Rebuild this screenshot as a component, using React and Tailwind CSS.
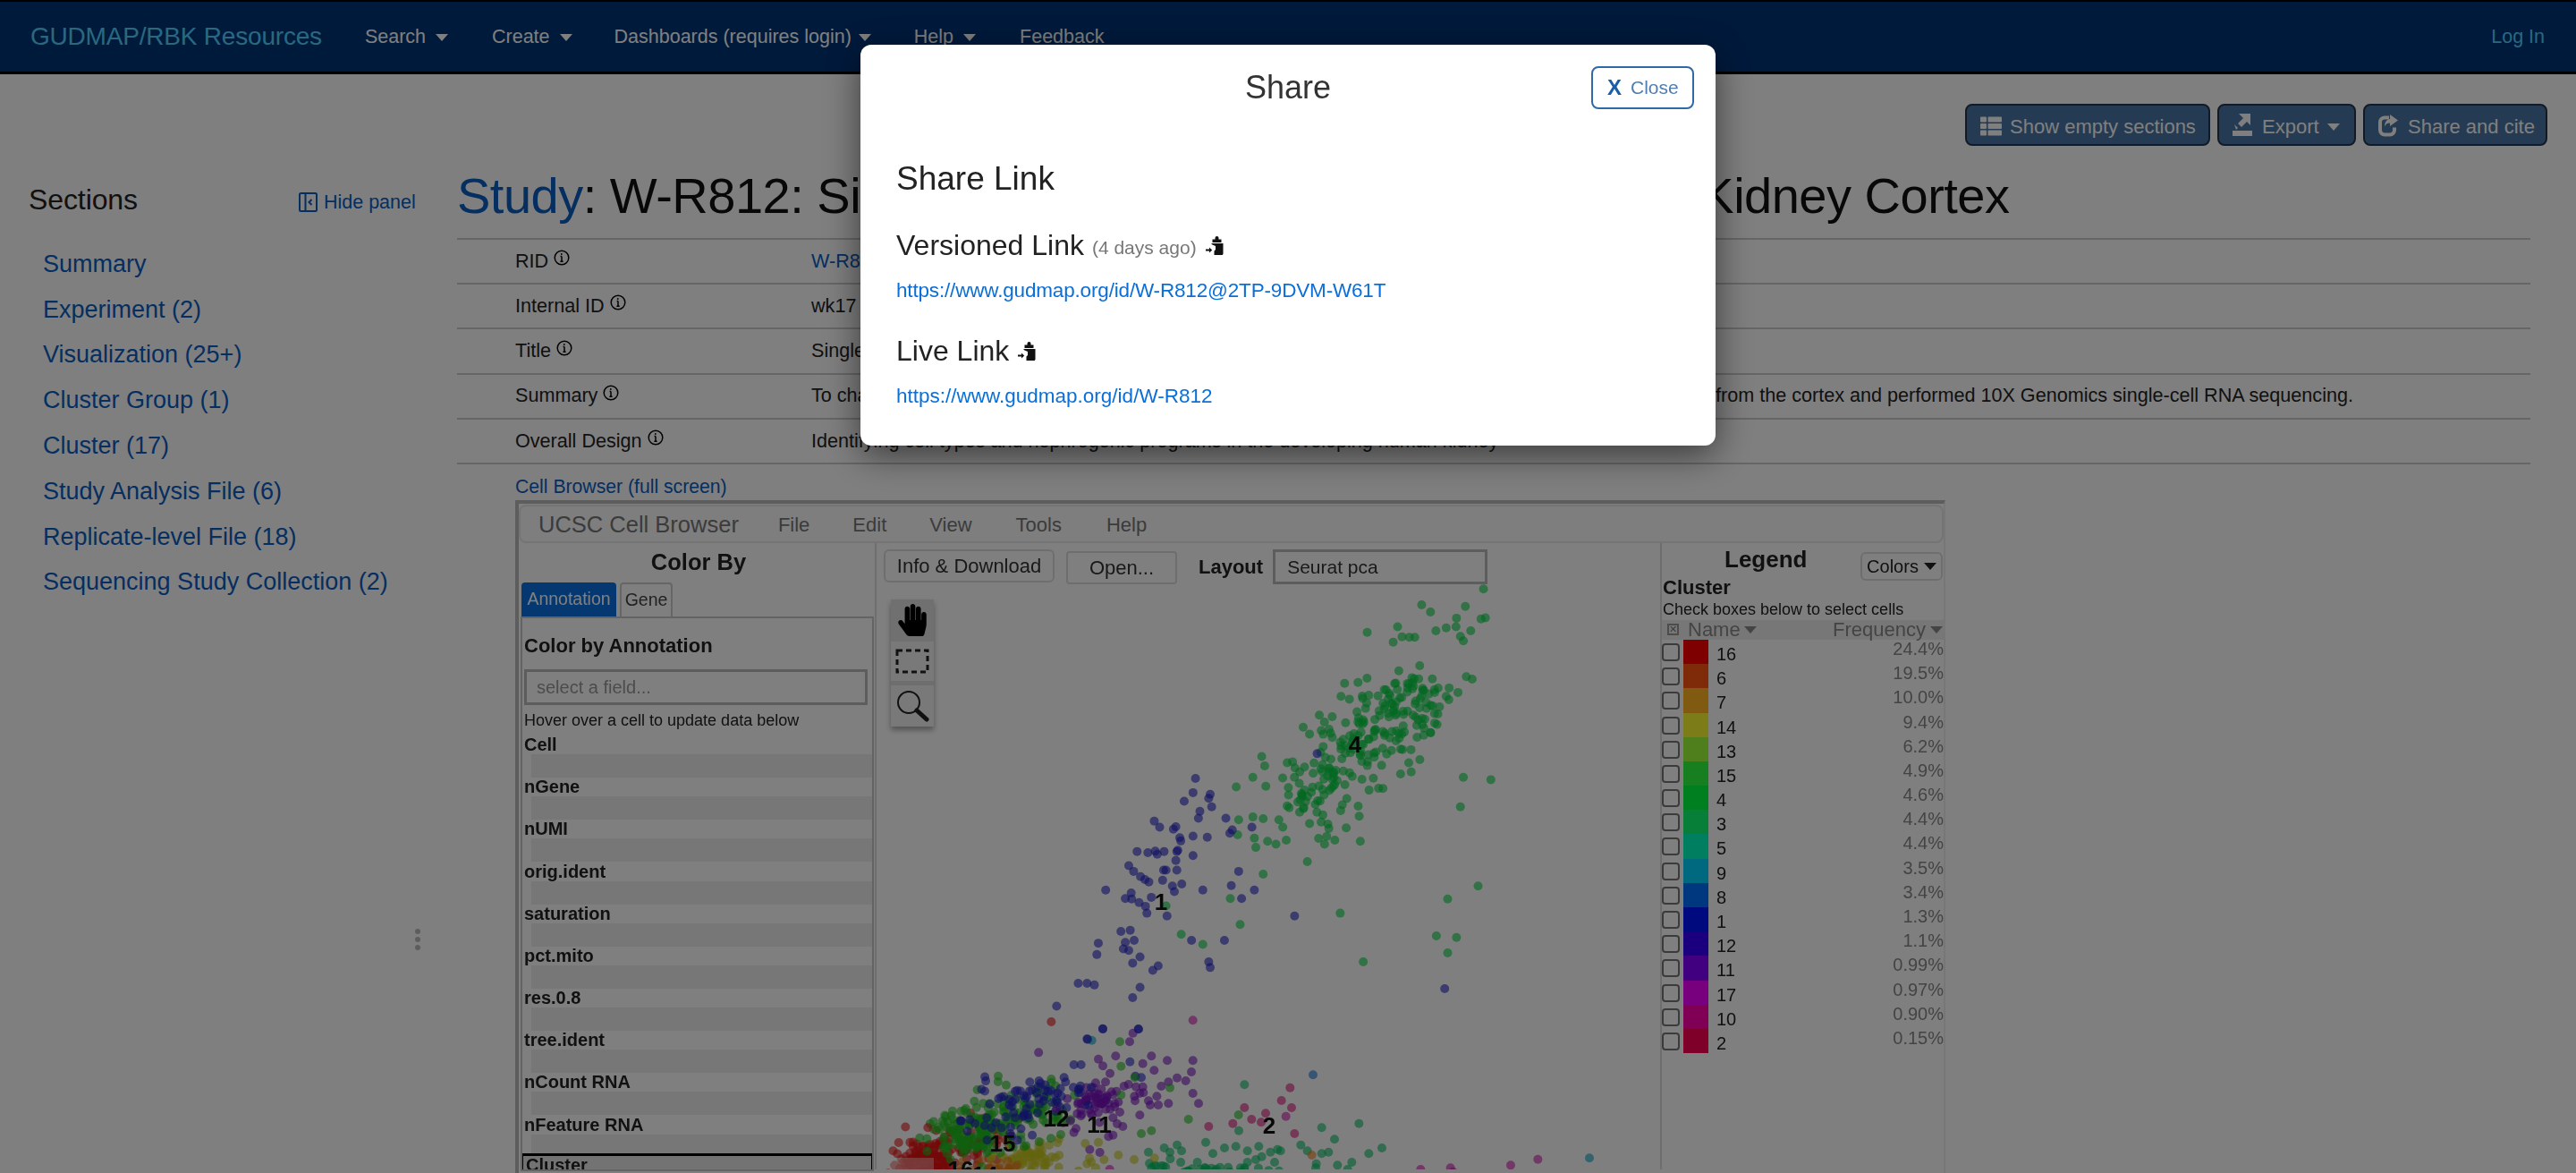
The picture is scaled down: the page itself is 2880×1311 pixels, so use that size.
import React from "react";
import { FaThList, FaHandPaper } from "react-icons/fa";

let seed = 12345;
const rnd = () => { seed = (seed * 1664525 + 1013904223) % 4294967296; return seed / 4294967296; };
const gauss = () => { let s = 0; for (let i = 0; i < 6; i++) s += rnd(); return (s - 3) / 0.707; };
const Z8 = (p) => [980 + p[0] / 1.823, 600 + p[1] / 2.205];
const Z9 = (p) => [980 + p[0] / 3, 1130 + p[1] / 3];
const Z10 = (p) => [1460 + p[0] / 3, 1130 + p[1] / 3];

const C = { red: "#e81010", orange: "#e8801a", yellow: "#c8c820", green: "#1ec01e", teal: "#00c060", blue: "#2020c8", purple: "#7a10c0", pink: "#e0107a", magenta: "#d010b0", cyan: "#00a0c0", sky: "#1070d8", em: "#00d040" };
const dots = [];
const add = (arr, fn, c) => arr.forEach((p) => dots.push([...fn(p), c]));
const blob = (n, cx, cy, sx, sy, c) => { for (let i = 0; i < n; i++) dots.push([cx + gauss() * sx, cy + gauss() * sy, c]); };
blob(170, 1040, 1298, 18, 14, C.red);
blob(60, 1090, 1275, 26, 14, C.red);
blob(70, 1150, 1292, 20, 11, C.yellow);
blob(30, 1115, 1305, 18, 6, C.orange);
blob(140, 1090, 1262, 26, 15, C.green);
blob(70, 1155, 1238, 24, 13, C.green);
blob(40, 1165, 1225, 34, 10, C.blue);
blob(22, 1130, 1255, 28, 10, C.blue);
blob(25, 1225, 1225, 12, 7, C.purple);
blob(22, 1215, 1235, 26, 18, C.purple);
blob(22, 1370, 1306, 22, 4, C.teal);
blob(12, 1300, 1305, 30, 4, C.teal);
add([[744,155],[759,178],[783,203],[768,232],[754,256],[735,235],[802,145],[860,68],[849,97],[893,170],[922,145],[931,193],[975,160],[1061,160],[1056,198],[1037,228],[1008,218],[979,232],[955,246],[1061,270],[1080,304],[979,304],[945,309],[918,309],[940,280],[912,295],[895,268],[883,270],[867,295],[865,280],[845,240],[830,246],[870,248],[893,248],[788,265],[793,275],[811,299],[759,299],[754,304],[769,323],[783,323],[816,333],[883,343],[793,352],[807,372],[826,381],[793,410],[778,415],[715,458],[749,468]], Z9, C.purple);
add([[759,54],[878,54],[706,87],[850,164],[662,174],[686,174],[888,217],[868,212],[514,232],[629,217],[634,232],[465,263],[472,260],[522,258],[565,260],[585,260],[620,280],[604,294],[504,280],[560,295],[445,290],[445,310],[660,250],[680,255],[720,250],[710,310],[540,335],[490,348],[465,352],[400,368],[370,352]], Z9, C.blue);
add([[722,92]], Z9, C.cyan);
add([[586,30],[172,385]], Z9, C.red);
add([[1061,25],[782,525],[1373,347]], Z9, C.magenta);
add([[1387,251],[1358,294],[1392,318],[1234,318],[1305,337],[1258,357],[1195,371],[1114,381],[1290,367],[1402,405]], Z9, C.pink);
add([[408,212],[586,222],[816,97],[820,179],[984,251],[1046,357],[1214,342],[888,405],[922,395],[820,275],[866,217],[328,296],[283,330]], Z9, C.green);
add([[1234,241],[1215,395],[1104,434],[1205,448],[1128,472],[1167,453],[1244,463],[1282,448],[1321,467],[1345,458],[1355,463],[1423,443],[1244,501],[1272,492],[1292,482],[1335,501],[1350,530],[1100,520],[1076,501],[1045,530],[1032,533],[965,453],[984,467],[1008,443],[1023,463],[985,490],[922,520],[912,467]], Z9, C.teal);
add([[700,438],[744,434],[714,487],[706,506],[735,520],[763,492],[811,477],[864,492],[932,487],[677,530],[720,500]], Z9, C.yellow);
add([[53,385],[178,371],[96,424],[76,467],[53,472],[5,463],[211,472],[255,453],[154,501],[106,511],[35,506],[33,520],[140,525]], Z10, C.teal);
add([[20,477],[96,545]], Z10, C.orange);
add([[385,525],[485,520],[494,533],[687,511],[778,491],[460,545]], Z10, C.magenta);
add([[951,487]], Z10, C.cyan);
add([[24,208]], Z10, C.sky);
for (let i = 0; i < 240; i++) {
  const t = rnd();
  const o = gauss() * 25;
  dots.push([1446 + 154 * t + o * 0.72, 908 - 154 * t + o * 0.72, C.em]);
}
add([[1237,124],[1111,163],[1129,181],[1200,167],[1182,196],[1232,198],[1241,195],[1000,231],[1062,217],[1140,227],[1161,220],[1181,217],[1211,227],[1190,241],[1196,252],[1071,242],[1086,243],[1097,243],[1202,340],[1214,346],[1167,368],[1185,379],[1144,432],[1129,478],[1196,588],[1252,594],[1190,661],[1068,580],[1072,520],[733,612],[767,588],[785,537],[791,560],[738,693],[736,730],[770,738],[773,761],[797,746],[814,753],[835,743],[913,753],[934,743],[986,746],[878,796],[788,827],[721,887],[945,923],[741,951],[621,975],[665,1000],[1226,856],[1164,888],[1141,979],[1182,983],[1164,1021],[992,1043],[590,905],[788,690],[820,693],[828,711],[767,686]], Z8, C.em);
add([[650,591],[645,626],[627,647],[680,630],[677,640],[683,661],[659,672],[656,689],[566,696],[577,711],[605,716],[610,710],[712,689],[725,718],[720,726],[765,711],[618,737],[645,733],[674,736],[620,745],[531,771],[553,774],[568,770],[572,778],[586,771],[612,771],[614,768],[610,793],[645,781],[514,806],[524,820],[538,833],[547,840],[555,846],[583,842],[585,817],[590,817],[612,817],[603,856],[622,851],[607,870],[738,820],[723,855],[665,866],[770,866],[744,887],[467,866],[519,873],[507,887],[520,888],[535,897],[548,906],[560,884],[551,923],[592,930],[852,930],[498,968],[517,965],[452,997],[507,995],[525,990],[503,1011],[514,1015],[449,1025],[537,1031],[522,1046],[574,1053],[563,1064],[642,990],[709,990],[677,1043],[680,1057],[411,1096],[429,1096],[444,1100],[537,1106],[522,1131],[367,1152],[1158,1109],[461,1208],[534,1209],[430,1234],[898,530]], Z8, C.blue);

const Caret = ({ cls = "" }) => <span className={`inline-block w-0 h-0 border-l-[7px] border-r-[7px] border-t-[8px] border-l-transparent border-r-transparent border-t-current ${cls}`} />;

const Info = () => (
  <svg width="18" height="18" viewBox="0 0 18 18" className="inline-block ml-[6px] -mt-[10px]" fill="none" stroke="#000" strokeWidth="1.5">
    <circle cx="9" cy="9" r="7.8" />
    <path d="M9 7.6v5.6M7.4 13.2h3.2M7.6 7.6H9" />
    <circle cx="8.8" cy="5" r="0.9" fill="#000" stroke="none" />
  </svg>
);

const ClipIcon = () => (
  <svg width="22" height="21" viewBox="0 0 22 21" className="inline-block" fill="#111">
    <path d="M8.500 3.500h3V2a2 2 0 0 1 4 0v1.500h3V7h-10z" />
    <path d="M7 8h13.500v11.500c0 .9-.6 1.500-1.500 1.500h-8.500v-4.500l1.500-1.500V11l-3.500-1.500z" />
    <path d="M1 14.500h4v-2l3.200 3-3.200 3v-2H1z" />
  </svg>
);

const NavLink = ({ label, ml, caret = true, caretMl = "ml-[11px]" }) => (
  <a className={`flex items-center text-[21.5px] text-white ${ml}`}>
    {label}
    {caret && <Caret cls={`${caretMl} mt-[2px]`} />}
  </a>
);

const ActionBtn = ({ children, w }) => (
  <button className={`h-[47px] pt-[3px] ${w} flex items-center rounded-[8px] border-2 border-[#22344a] bg-[#4a76a6] text-white text-[22px] shrink-0`}>{children}</button>
);

const rows = [
  ["RID", <a className="text-[#0a5dc2]">W-R812</a>],
  ["Internal ID", "wk17 human kidney cortex"],
  ["Title", "Single cell analysis of human week 17 kidney cortex"],
  ["Summary", <span><span className="inline-block w-[1011px] overflow-hidden whitespace-nowrap align-bottom">To characterize the cell types of the developing human kidney, we dissociated cells </span>from the cortex and performed 10X Genomics single-cell RNA sequencing.</span>],
  ["Overall Design", "Identifying cell types and nephrogenic programs in the developing human kidney"],
];
const sections = ["Summary", "Experiment (2)", "Visualization (25+)", "Cluster Group (1)", "Cluster (17)", "Study Analysis File (6)", "Replicate-level File (18)", "Sequencing Study Collection (2)"];
const fields = ["Cell", "nGene", "nUMI", "orig.ident", "saturation", "pct.mito", "res.0.8", "tree.ident", "nCount RNA", "nFeature RNA"];
const legend = [
  ["16", "24.4%", "#ff0000"], ["6", "19.5%", "#ff5510"], ["7", "10.0%", "#ffb420"], ["14", "9.4%", "#f8f830"], ["13", "6.2%", "#9cff38"], ["15", "4.9%", "#30ff40"], ["4", "4.6%", "#00ff40"], ["3", "4.4%", "#10ff70"], ["5", "4.4%", "#00ffc0"], ["9", "3.5%", "#00d0ff"], ["8", "3.4%", "#0070ff"], ["1", "1.3%", "#0014ff"], ["12", "1.1%", "#3400ff"], ["11", "0.99%", "#8000ff"], ["17", "0.97%", "#f000ff"], ["10", "0.90%", "#ff00aa"], ["2", "0.15%", "#ff0050"],
];
const plotLabels = [["4", 1515, 830], ["1", 1298, 1006], ["2", 1419, 1256], ["12", 1181, 1248], ["11", 1229, 1255], ["15", 1121, 1276], ["16", 1074, 1305], ["14", 1101, 1311]];

export default function App() {
  return (
    <div className="relative w-full h-[1311px] overflow-hidden bg-white font-['Liberation_Sans',Arial,sans-serif] text-[#333]">
      <nav className="h-[83px] bg-[#003478] border-t-2 border-b-[3px] border-black flex items-center pr-[35px]">
        <a className="ml-[34px] text-[28px] text-[#55d0ff] tracking-[-0.2px]">GUDMAP/RBK Resources</a>
        <NavLink label="Search" ml="ml-[48px]" />
        <NavLink label="Create" ml="ml-[49px]" />
        <NavLink label="Dashboards (requires login)" ml="ml-[47px]" caretMl="ml-[8px]" />
        <NavLink label="Help" ml="ml-[48px]" />
        <NavLink label="Feedback" ml="ml-[49px]" caret={false} />
        <a className="ml-auto text-[21.5px] text-[#55d0ff]">Log In</a>
      </nav>

      <div className="flex justify-end gap-[8px] pt-[33px] pr-[32px]">
        <ActionBtn w="w-[274px]">
          <FaThList className="ml-[15px] mr-[9px] text-[24px]" />
          Show empty sections
        </ActionBtn>
        <ActionBtn w="w-[155px]">
          <svg width="24" height="28" viewBox="0 0 24 28" className="ml-[14px] mr-[10px] -mt-[3px]" fill="#fff">
            <path d="M8 1h13v13l-4-4-6 6-4-4 6-6z" />
            <path d="M3 13l4 4-2 2zM1 20h22v6H1z" />
          </svg>
          Export
          <Caret cls="ml-[9px] mt-[2px]" />
        </ActionBtn>
        <ActionBtn w="w-[206px]">
          <svg width="24" height="26" viewBox="0 0 24 26" className="ml-[14px] mr-[10px] -mt-[3px]" fill="none" stroke="#fff" strokeWidth="4">
            <path d="M13 4.500H8a5 5 0 0 0-5 5v9a5 5 0 0 0 5 5h6a5 5 0 0 0 5-5v-3" />
            <path d="M14 1l9 6.500-9 6.500V10.500c-3 0-5 1.200-6 4 0-5 2.500-8 6-8.500z" fill="#fff" stroke="none" />
          </svg>
          Share and cite
        </ActionBtn>
      </div>

      <div className="flex pt-[27px]">
        <aside className="relative w-[511px] shrink-0">
          <div className="flex items-center h-[64px] pl-[32px] pt-[2px]">
            <h2 className="text-[32px] text-[#222] tracking-[-0.1px]">Sections</h2>
            <a className="ml-[180px] mt-[6px] flex items-center text-[21.5px] text-[#0a5dc2]">
              <svg width="21" height="22" viewBox="0 0 21 22" className="mr-[7px]" fill="none" stroke="#0a5dc2" strokeWidth="2">
                <rect x="1" y="1" width="19" height="20" rx="1.500" />
                <path d="M7.500 1v20M14.500 8l-3 3 3 3" />
              </svg>
              Hide panel
            </a>
          </div>
          <ul className="pl-[48px] mt-[16px] flex flex-col gap-[0.6px]">
            {sections.map((s) => (
              <li key={s} className="h-[50.2px] flex items-center text-[27px] text-[#0a5dc2]">{s}</li>
            ))}
          </ul>
          <div className="absolute left-[464px] top-[848px] flex flex-col gap-[3px]">
            <span className="w-[6px] h-[6px] rounded-full bg-[#bbb]" />
            <span className="w-[6px] h-[6px] rounded-full bg-[#bbb]" />
            <span className="w-[6px] h-[6px] rounded-full bg-[#bbb]" />
          </div>
        </aside>

        <main className="flex-1 pr-[51px] min-w-0">
          <h1 className="h-[56px] mb-[20px] text-[56px] leading-[58px] text-[#111] whitespace-nowrap tracking-[-0.5px]">
            <span className="text-[#0a5dc2]">Study</span>: W-R812: Single Cell Analysis for human Week 17 Kidney Cortex
          </h1>
          {rows.map(([k, v]) => (
            <div key={k} className="h-[50.2px] border-t-2 border-[#ccc] flex items-center text-[21.6px] text-[#222]">
              <div className="w-[396px] pl-[65px] shrink-0">{k}<Info /></div>
              <div className="whitespace-nowrap">{v}</div>
            </div>
          ))}
          <div className="border-t-2 border-[#ccc] pl-[65px] pt-[11px]">
            <a className="block h-[27px] text-[21.2px] leading-[27px] text-[#0a5dc2]">Cell Browser (full screen)</a>
            <div className="mt-[2px] w-[1599px] h-[760px] overflow-hidden border-t-4 border-l-4 border-r-2 border-t-[#bbb] border-l-[#bbb] border-r-[#eee] blur-[0.6px] text-[#222]">
              <div className="h-[43px] mt-[1px] pt-[2px] flex items-center rounded-[8px] border-2 border-[#e8e8e8] bg-[#fdfdfd] text-[#777] text-[24px] pl-[20px]">
                <span className="text-[25.500px]">UCSC Cell Browser</span>
                <span className="ml-[44px] text-[22px]">File</span>
                <span className="ml-[48px] text-[22px]">Edit</span>
                <span className="ml-[48px] text-[22px]">View</span>
                <span className="ml-[49px] text-[22px]">Tools</span>
                <span className="ml-[50px] text-[22px]">Help</span>
              </div>
              <div className="flex h-[700px]">
                <div className="w-[400px] shrink-0 border-r-2 border-[#ddd]">
                  <div className="h-[42px] flex items-center justify-center text-[25.500px] font-bold pl-[4px] text-[#222]">Color By</div>
                  <div className="flex gap-[4px] pl-[3px] h-[40px] items-end">
                    <div className="w-[106px] h-[38px] rounded-t-[4px] bg-[#0a6fe0] text-white flex items-center justify-center text-[19.500px]">Annotation</div>
                    <div className="w-[59px] h-[38px] rounded-t-[4px] border-2 border-[#ccc] border-b-0 flex items-center justify-center text-[19.500px] text-[#444]">Gene</div>
                  </div>
                  <div className="ml-[2px] mr-[1px] border-2 border-[#c8c8c8] h-[620px] overflow-hidden pl-[2px]">
                    <div className="mt-[19px] text-[22px] leading-[24px] font-bold text-[#222]">Color by Annotation</div>
                    <div className="mt-[14px] h-[40px] w-[384px] border-[3px] border-[#bbb] flex items-center pl-[11px] text-[20px] text-[#999]">select a field...</div>
                    <div className="mt-[5px] text-[18px] leading-[24px] text-[#222]">Hover over a cell to update data below</div>
                    <div className="pt-[4px]">
                      {fields.map((f) => (
                        <div key={f} className="h-[47.200px]">
                          <div className="h-[22px] text-[20px] leading-[22px] font-bold text-[#222]">{f}</div>
                          <div className="ml-[8px] h-[26px] bg-[#eeeeee]" />
                        </div>
                      ))}
                    </div>
                    <div className="-ml-[4px] -mr-[2px] -mt-[4px] h-[60px] border-[3px] border-black bg-[#e6e6e6] pl-[3px] text-[20px] leading-[20px] font-bold text-[#222]">Cluster</div>
                  </div>
                </div>

                <div className="relative flex-1 min-w-0 overflow-hidden">
                  <svg className="absolute left-0 top-0" width="875" height="706" viewBox="980 605 875 706">
                    {dots.map((d, i) => (
                      <circle key={i} cx={d[0]} cy={d[1]} r="5" fill={d[2]} fillOpacity="0.6" />
                    ))}
                  </svg>
                  {plotLabels.map(([t, x, y]) => (
                    <span key={t} className="absolute -translate-x-1/2 -translate-y-1/2 text-[26px] font-bold text-[#111]" style={{ left: x - 980, top: y - 605 }}>{t}</span>
                  ))}
                  <div className="relative flex items-start pl-[8px] pt-[7px] text-[22px] text-[#333]">
                    <button className="w-[191px] h-[37px] rounded-[6px] border-2 border-[#ddd] bg-white">Info &amp; Download</button>
                    <button className="ml-[13px] mt-[2px] w-[124px] h-[37px] rounded-[4px] border-2 border-[#ddd] bg-white">Open...</button>
                    <span className="ml-[24px] mt-[3px] font-bold text-[#222]">Layout</span>
                    <div className="ml-[11px] w-[240px] h-[39px] border-[3px] border-[#bbb] bg-[#fff] pl-[13px] flex items-center text-[21px]">Seurat pca</div>
                  </div>
                  <div className="absolute left-[16px] top-[63px] w-[48px] shadow-[0_4px_6px_rgba(0,0,0,0.35)]">
                    <div className="h-[47px] bg-[#e0e0e0] flex items-center justify-center"><FaHandPaper className="text-[36px] text-black" /></div>
                    <div className="h-[44px] bg-[#f2f2f2] flex items-center justify-center">
                      <svg width="38" height="28" viewBox="0 0 38 28" fill="none" stroke="#222" strokeWidth="3" strokeDasharray="6 4"><rect x="2" y="2" width="34" height="24" /></svg>
                    </div>
                    <div className="h-[5px] bg-[#dcdcdc]" />
                    <div className="h-[46px] bg-[#f2f2f2] flex items-center justify-center">
                      <svg width="38" height="38" viewBox="0 0 38 38" fill="none" stroke="#222"><circle cx="15" cy="15" r="12" strokeWidth="2" /><path d="M24 24l11 10" strokeWidth="5" strokeLinecap="round" /></svg>
                    </div>
                  </div>
                  <div className="absolute left-[16px] top-[687px] w-[48px] h-[40px] bg-white/40" />
                </div>

                <div className="w-[317px] shrink-0 border-l-2 border-[#ddd]">
                  <div className="relative h-[38px]">
                    <div className="absolute left-[60px] top-[3px] text-[26px] leading-[30px] font-bold text-[#222] pl-[10px]">Legend</div>
                    <button className="absolute right-[1px] top-[10px] w-[92px] h-[32px] rounded-[6px] border-2 border-[#ddd] bg-white flex items-center justify-center text-[20px]">Colors<Caret cls="ml-[6px] border-l-[6px] border-r-[6px] border-t-[6px]" /></button>
                  </div>
                  <div className="text-[22px] leading-[24px] font-bold text-[#222] pl-[1px]">Cluster</div>
                  <div className="text-[18px] leading-[24px] text-[#222] pl-[1px]">Check boxes below to select cells</div>
                  <div className="h-[22px] bg-[#eeeeee] flex items-center text-[22px] text-[#888]">
                    <span className="ml-[6px] w-[13px] h-[13px] border-2 border-[#999] flex items-center justify-center text-[11px] leading-none text-[#777]">✕</span>
                    <span className="ml-[10px]">Name</span>
                    <Caret cls="ml-[4px] border-l-[5px] border-r-[5px] border-t-[5px]" />
                    <span className="ml-auto">Frequency</span>
                    <Caret cls="ml-[5px] mr-[1px] border-l-[5px] border-r-[5px] border-t-[5px]" />
                  </div>
                  {legend.map(([n, f, c]) => (
                    <div key={n} className="h-[27.200px] flex">
                      <span className="mt-[4px] w-[20px] h-[20px] rounded-[4px] border-2 border-[#777] bg-white shrink-0" />
                      <span className="ml-[4px] w-[28px] h-full shrink-0" style={{ background: c }} />
                      <span className="ml-[9px] pt-[3px] text-[20px] leading-[27px] text-[#222]">{n}</span>
                      <span className="ml-auto -mt-[2px] text-[20px] leading-[24px] text-[#888]">{f}</span>
                    </div>
                  ))}
                </div>
              </div>
            </div>
          </div>
        </main>
      </div>

      <div className="absolute inset-0 bg-black/50" />

      <div className="absolute left-[962px] top-[50px] w-[956px] h-[448px] rounded-[12px] bg-white shadow-[0_10px_40px_rgba(0,0,0,0.55)] px-[40px]">
        <div className="relative h-[96px] flex items-center justify-center">
          <h3 className="text-[36px] text-[#333]">Share</h3>
          <button className="absolute right-[-16px] top-[24px] w-[115px] h-[48px] rounded-[8px] border-2 border-[#2f6aa8] flex items-center pl-[16px] text-[21px] text-[#4f7fb0]">
            <span className="font-bold text-[24px] text-[#1a5ea8] mr-[10px]">X</span>Close
          </button>
        </div>
        <div className="mt-[30px] text-[37px] leading-[48px] text-[#222]">Share Link</div>
        <div className="mt-[28px] flex items-center h-[44px]">
          <span className="text-[32px] text-[#222]">Versioned Link</span>
          <span className="ml-[9px] mt-[6px] text-[21px] text-[#777]">(4 days ago)</span>
          <span className="ml-[9px] flex"><ClipIcon /></span>
        </div>
        <a className="block mt-[14px] h-[30px] text-[22.5px] leading-[30px] tracking-[-0.17px] text-[#0a6fd8]">https://www.gudmap.org/id/W-R812@2TP-9DVM-W61T</a>
        <div className="mt-[30px] flex items-center h-[44px]">
          <span className="text-[32px] text-[#222]">Live Link</span>
          <span className="ml-[9px] flex"><ClipIcon /></span>
        </div>
        <a className="block mt-[14px] h-[30px] text-[22.5px] leading-[30px] text-[#0a6fd8]">https://www.gudmap.org/id/W-R812</a>
      </div>
    </div>
  );
}
